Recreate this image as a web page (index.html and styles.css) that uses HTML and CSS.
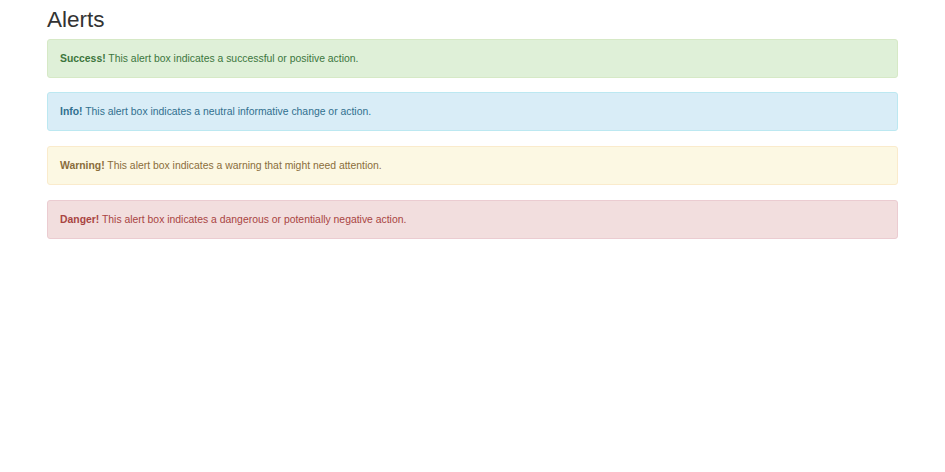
FILE: index.html
```html
<!DOCTYPE html>
<html lang="en">
<head>
<meta charset="utf-8">
<title>Alerts</title>
<link rel="stylesheet" href="styles.css">
</head>
<body>
<div class="container">
  <h2 class="title">Alerts</h2>
  <div class="alert alert-success"><strong>Success!</strong> This alert box indicates a successful or positive action.</div>
  <div class="alert alert-info"><strong>Info!</strong> This alert box indicates a neutral informative change or action.</div>
  <div class="alert alert-warning"><strong>Warning!</strong> This alert box indicates a warning that might need attention.</div>
  <div class="alert alert-danger"><strong>Danger!</strong> This alert box indicates a dangerous or potentially negative action.</div>
</div>
</body>
</html>
```
FILE: styles.css
```css
html, body {
  margin: 0;
  padding: 0;
  background: #fff;
}
body {
  font-family: "Liberation Sans", Arial, Helvetica, sans-serif;
  font-size: 10.4px;
  line-height: 15px;
  color: #333;
}
.container {
  margin: 0 47px;
}
.title {
  margin: 8px 0 6px;
  font-size: 22.5px;
  font-weight: 500;
  line-height: 1.1;
  color: #333;
}
.alert {
  padding: 11px 12px;
  margin-bottom: 14.7px;
  border: 1px solid transparent;
  border-radius: 3px;
}
.alert strong {
  font-weight: 700;
}
.alert-success {
  color: #3c763d;
  background: #dff0d8;
  border-color: #d6e9c6;
}
.alert-info {
  color: #31708f;
  background: #d9edf7;
  border-color: #bce8f1;
}
.alert-warning {
  color: #8a6d3b;
  background: #fcf8e3;
  border-color: #faebcc;
}
.alert-danger {
  color: #a94442;
  background: #f2dede;
  border-color: #ebccd1;
}
```
